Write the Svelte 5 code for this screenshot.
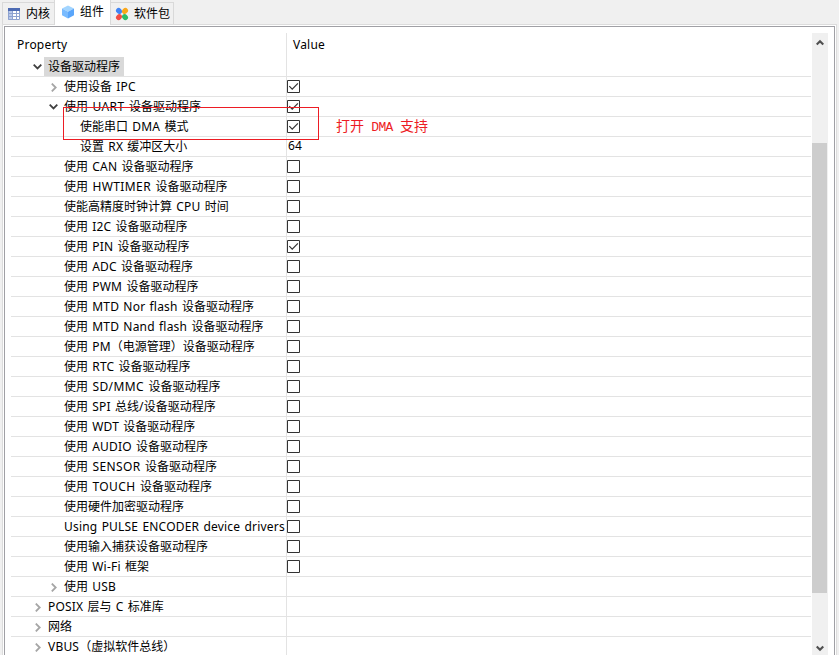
<script>
  const drv = '设备驱动程序';
  const rows = [
    { l: 1, t: drv, a: 'open', sel: true },
    { l: 2, t: '使用设备 IPC', a: 'closed', c: true },
    { l: 2, t: `使用 UART ${drv}`, a: 'open', c: true },
    { l: 3, t: '使能串口 DMA 模式', c: true },
    { l: 3, t: '设置 RX 缓冲区大小', v: '64' },
    { l: 2, t: `使用 CAN ${drv}`, c: false },
    { l: 2, t: `使用 HWTIMER ${drv}`, c: false },
    { l: 2, t: '使能高精度时钟计算 CPU 时间', c: false },
    { l: 2, t: `使用 I2C ${drv}`, c: false },
    { l: 2, t: `使用 PIN ${drv}`, c: true },
    { l: 2, t: `使用 ADC ${drv}`, c: false },
    { l: 2, t: `使用 PWM ${drv}`, c: false },
    { l: 2, t: `使用 MTD Nor flash ${drv}`, c: false },
    { l: 2, t: `使用 MTD Nand flash ${drv}`, c: false },
    { l: 2, t: `使用 PM（电源管理）${drv}`, c: false },
    { l: 2, t: `使用 RTC ${drv}`, c: false },
    { l: 2, t: `使用 SD/MMC ${drv}`, c: false },
    { l: 2, t: `使用 SPI 总线/${drv}`, c: false },
    { l: 2, t: `使用 WDT ${drv}`, c: false },
    { l: 2, t: `使用 AUDIO ${drv}`, c: false },
    { l: 2, t: `使用 SENSOR ${drv}`, c: false },
    { l: 2, t: `使用 TOUCH ${drv}`, c: false },
    { l: 2, t: '使用硬件加密驱动程序', c: false },
    { l: 2, t: 'Using PULSE ENCODER device drivers', c: false },
    { l: 2, t: '使用输入捕获设备驱动程序', c: false },
    { l: 2, t: '使用 Wi-Fi 框架', c: false },
    { l: 2, t: '使用 USB', a: 'closed' },
    { l: 1, t: 'POSIX 层与 C 标准库', a: 'closed' },
    { l: 1, t: '网络', a: 'closed' },
    { l: 1, t: 'VBUS（虚拟软件总线）', a: 'closed' }
  ];
  // Splits a label into runs so that only the Latin ones are letter-spaced.
  const runs = (t) => t.match(/[\x20-\x7e]+|[^\x20-\x7e]+/g);
  const wide = (s) => /^ (HWTIMER|SD\/MMC|SENSOR|UART|TOUCH) $/.test(s);
</script>

<div class="app">
  <div class="tabs">
    <div class="tab first">
      <svg width="14" height="14" viewBox="0 0 14 14"><path fill="#fff" d="M1 1h12v12H1z"/><path fill="#b9c9ea" d="M1 4h4v9H1z"/><path fill="#4d6bb3" d="M1 1h12v3H1z"/><path fill="none" stroke="#8da2d0" d="M1.500 4v8.500h11V4M1 6.500h12M1 9.500h12M5.500 4v8M9.500 4v8"/></svg>
      <span>内核</span>
    </div>
    <div class="tab active">
      <svg width="14" height="14" viewBox="0 0 14 14"><path fill="#a3d5ff" d="M7 .5 13 3.500 7 6.800 1 3.500z"/><path fill="#79bbff" d="M1 3.500 7 6.800V13.500L1 10.300z"/><path fill="#5aa6fb" d="M13 3.500 7 6.800V13.500l6-3.200z"/></svg>
      <span>组件</span>
    </div>
    <div class="tab last">
      <svg width="14" height="14" viewBox="0 0 14 14"><g transform="rotate(45 7 7)"><ellipse cx="2.700" cy="7" rx="3.200" ry="2.700" fill="#4285f4"/><ellipse cx="7" cy="2.700" rx="2.700" ry="3.200" fill="#fba718"/><ellipse cx="7" cy="11.300" rx="2.700" ry="3.200" fill="#f34e45"/><ellipse cx="11.300" cy="7" rx="3.200" ry="2.700" fill="#2fbd67"/></g></svg>
      <span>软件包</span>
    </div>
  </div>
  <div class="outer">
    <div class="panel">
      <div class="tree">
        <div class="head"><div class="name latin">Property</div><div class="value latin">Value</div></div>
        {#each rows as r}
          <div class="row">
            <div class="name l{r.l}">
              <span class="tw" class:closed={r.a === 'closed'}>
                {#if r.a === 'open'}
                  <svg width="9" height="6" viewBox="0 0 9 6"><path d="M.7.7 4.500 4.500 8.300.7" fill="none" stroke="#404040" stroke-width="1.800"/></svg>
                {:else if r.a === 'closed'}
                  <svg width="6" height="9" viewBox="0 0 6 9"><path d="M.8.6 4.700 4.500.8 8.400" fill="none" stroke="#a6a6a6" stroke-width="1.800"/></svg>
                {/if}
              </span>
              <span class="label" class:sel={r.sel}>{#each runs(r.t) as s}<span class:latin={s.charCodeAt(0) < 127} class:wide={wide(s)}>{s}</span>{/each}</span>
            </div>
            <div class="value">
              {#if r.v}
                <span class="num">{r.v}</span>
              {:else if r.c !== undefined}
                <svg class="box" width="13" height="13" viewBox="0 0 13 13"><path d="M.5.5h12v12H.5z" fill="#fff" stroke="#333"/>{#if r.c}<path d="m2.300 6.200 2.900 2.900 5.700-5.700" fill="none" stroke="#333" stroke-width="1.200"/>{/if}</svg>
              {/if}
            </div>
          </div>
        {/each}
      </div>
      <div class="bar">
        <svg width="8" height="7" viewBox="0 0 8 7"><path d="M.7 5.500 4 2.200l3.300 3.300" fill="none" stroke="#505050" stroke-width="2.200"/></svg>
        <div class="thumb"></div>
        <svg width="8" height="7" viewBox="0 0 8 7"><path d="M.7 1.500 4 4.800l3.300-3.300" fill="none" stroke="#505050" stroke-width="2.200"/></svg>
      </div>
    </div>
  </div>
  <div class="mark"></div>
  <div class="note">打开<span>{' DMA '}</span>支持</div>
</div>

<style>
  .app { position: relative; width: 839px; height: 655px; overflow: hidden; background: #f0f0f0; color: #000; font: 12px/20px "Noto Sans", "Noto Sans CJK SC", sans-serif; display: flex; flex-direction: column; box-sizing: border-box; padding-left: 2px; }
  .app * { box-sizing: border-box; }
  svg { display: block; flex: none; }
  .latin { letter-spacing: 0.2px; word-spacing: 0.9px; white-space: pre; }
  .wide { letter-spacing: 0.4px; }
  .tabs { height: 24px; display: flex; align-items: flex-end; flex: none; }
  .tab { height: 22px; display: flex; align-items: center; gap: 5px; border: 1px solid #d9d9d9; border-bottom: 0; white-space: nowrap; }
  .first { width: 52px; padding-left: 4px; border-right: 0; }
  .active { width: 57px; height: 25px; margin-bottom: -1px; padding: 0 0 1px 6px; gap: 5px; background: #fff; border-top: 0; position: relative; }
  .last { width: 63px; padding-left: 4px; border-left: 0; }
  .outer { flex: 1; width: 835px; border: 1px solid #dcdcdc; border-bottom: 0; padding: 1px 1px 0; background: #fff; min-height: 0; }
  .panel { height: 100%; border: 1px solid #a0a0a5; border-bottom: 0; padding: 6px 6px 0 6px; display: flex; overflow: hidden; }
  .tree { width: 800px; flex: none; }
  .head, .row { display: flex; }
  .head { height: 24px; line-height: 23px; }
  .row { height: 20px; border-bottom: 1px solid #e3e3e3; }
  .name { width: 276px; flex: none; border-right: 1px solid #e3e3e3; display: flex; white-space: nowrap; }
  .head .name { padding-left: 6px; }
  .head .value { padding-left: 6px; }
  .l1 { padding-left: 22px; }
  .l2 { padding-left: 38px; }
  .l3 { padding-left: 54px; }
  .tw { width: 11px; height: 19px; display: flex; align-items: center; flex: none; }
  .closed { padding: 1px 0 0 2px; }
  .label { line-height: 19px; padding-left: 4px; height: 19px; }
  .sel { background: #d9d9d9; padding-right: 4px; }
  .box { margin-top: 3px; }
  .num { line-height: 17px; padding-left: 1px; display: block; letter-spacing: 0.2px; }
  .bar { width: 16px; margin-left: 1px; background: #f0f0f0; display: flex; flex-direction: column; align-items: center; padding: 6px 1px 3px 0; }
  .thumb { width: 15px; height: 450px; margin-top: 97px; margin-bottom: auto; background: #cdcdcd; flex: none; }
  .mark { position: absolute; left: 63px; top: 107px; width: 256px; height: 33px; border: 1px solid #ed1c24; }
  .note { position: absolute; left: 336px; top: 117px; color: #ed1c24; font: 14px/20px "Liberation Mono", "Noto Sans CJK SC", monospace; white-space: pre; }
  .note span { font-size: 13px; letter-spacing: -0.6px; }
</style>
